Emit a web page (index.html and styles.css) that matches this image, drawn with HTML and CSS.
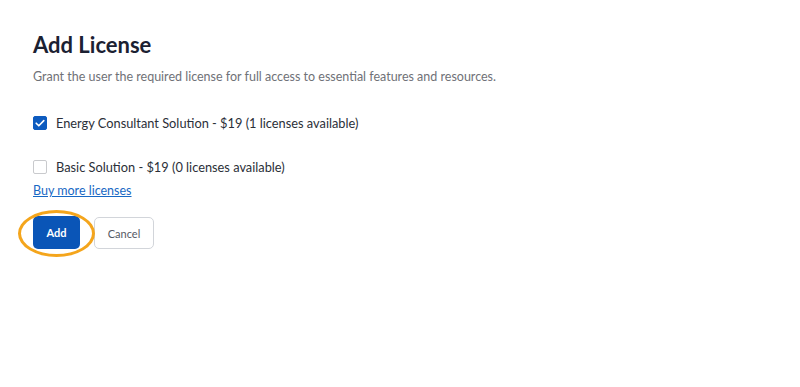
FILE: index.html
```html
<!DOCTYPE html>
<html lang="en">
<head>
  <meta charset="UTF-8" />
  <title>Add License</title>
  <link rel="stylesheet" href="styles.css">
</head>
<body>
  <div class="panel">
    <h1 class="title">Add License</h1>
    <p class="subtitle">Grant the user the required license for full access to essential features and resources.</p>

    <label class="option">
      <span class="box checked">
        <svg viewBox="0 0 14 14"><path d="M3.2 7.2l2.6 2.6 5-5.2" fill="none" stroke="#fff" stroke-width="1.6" stroke-linecap="round" stroke-linejoin="round"/></svg>
      </span>
      Energy Consultant Solution - $19 (1 licenses available)
    </label>

    <label class="option">
      <span class="box"></span>
      Basic Solution - $19 (0 licenses available)
    </label>

    <a class="buy-link" href="#">Buy more licenses</a>

    <div class="actions">
      <button class="btn btn-primary">Add</button>
      <button class="btn btn-cancel">Cancel</button>
    </div>
  </div>
</body>
</html>
```

FILE: styles.css
```css
body {
  margin: 0;
  background: #fff;
  font-family: Lato, "Noto Sans", sans-serif;
  color: #2b2f38;
}

.panel {
  padding: 30px 33px;
}

.title {
  margin: 0;
  font-size: 22px;
  font-weight: 700;
  color: #1b2132;
  line-height: 30px;
}

.subtitle {
  margin: 9px 0 0;
  font-size: 12.5px;
  color: #6f7177;
  line-height: 16px;
}

.option {
  display: flex;
  align-items: center;
  gap: 9px;
  margin-top: 30px;
  font-size: 12.8px;
  color: #2b2f38;
  line-height: 16px;
}

.option + .option {
  margin-top: 28px;
}

.box {
  width: 14px;
  height: 14px;
  box-sizing: border-box;
  border: 1.5px solid #c9cacd;
  border-radius: 2px;
  display: flex;
}

.box.checked {
  background: #0d5bbf;
  border-color: #0d5bbf;
}

.box svg {
  width: 14px;
  height: 14px;
  margin: -1.5px;
}

.buy-link {
  display: inline-block;
  margin-top: 8px;
  font-size: 12.5px;
  color: #1868c4;
  text-decoration: underline;
}

.actions {
  display: flex;
  gap: 14px;
  margin-top: 18px;
}

.btn {
  font-family: inherit;
  font-size: 11px;
  border-radius: 5px;
  height: 33px;
  cursor: pointer;
}

.btn-primary {
  position: relative;
  width: 47px;
  background: #0a55b7;
  border: none;
  color: #fff;
  font-weight: 700;
}

/* highlight ring round the add button */
.btn-primary::after {
  content: "";
  position: absolute;
  left: -15px;
  top: -6px;
  width: 77px;
  height: 47px;
  box-sizing: border-box;
  border: 3px solid #f4a51c;
  border-radius: 50%;
}

.btn-cancel {
  width: 60px;
  margin-top: 1px;
  height: 32px;
  background: #fff;
  border: 1px solid #d2d5da;
  color: #555a64;
}
```
